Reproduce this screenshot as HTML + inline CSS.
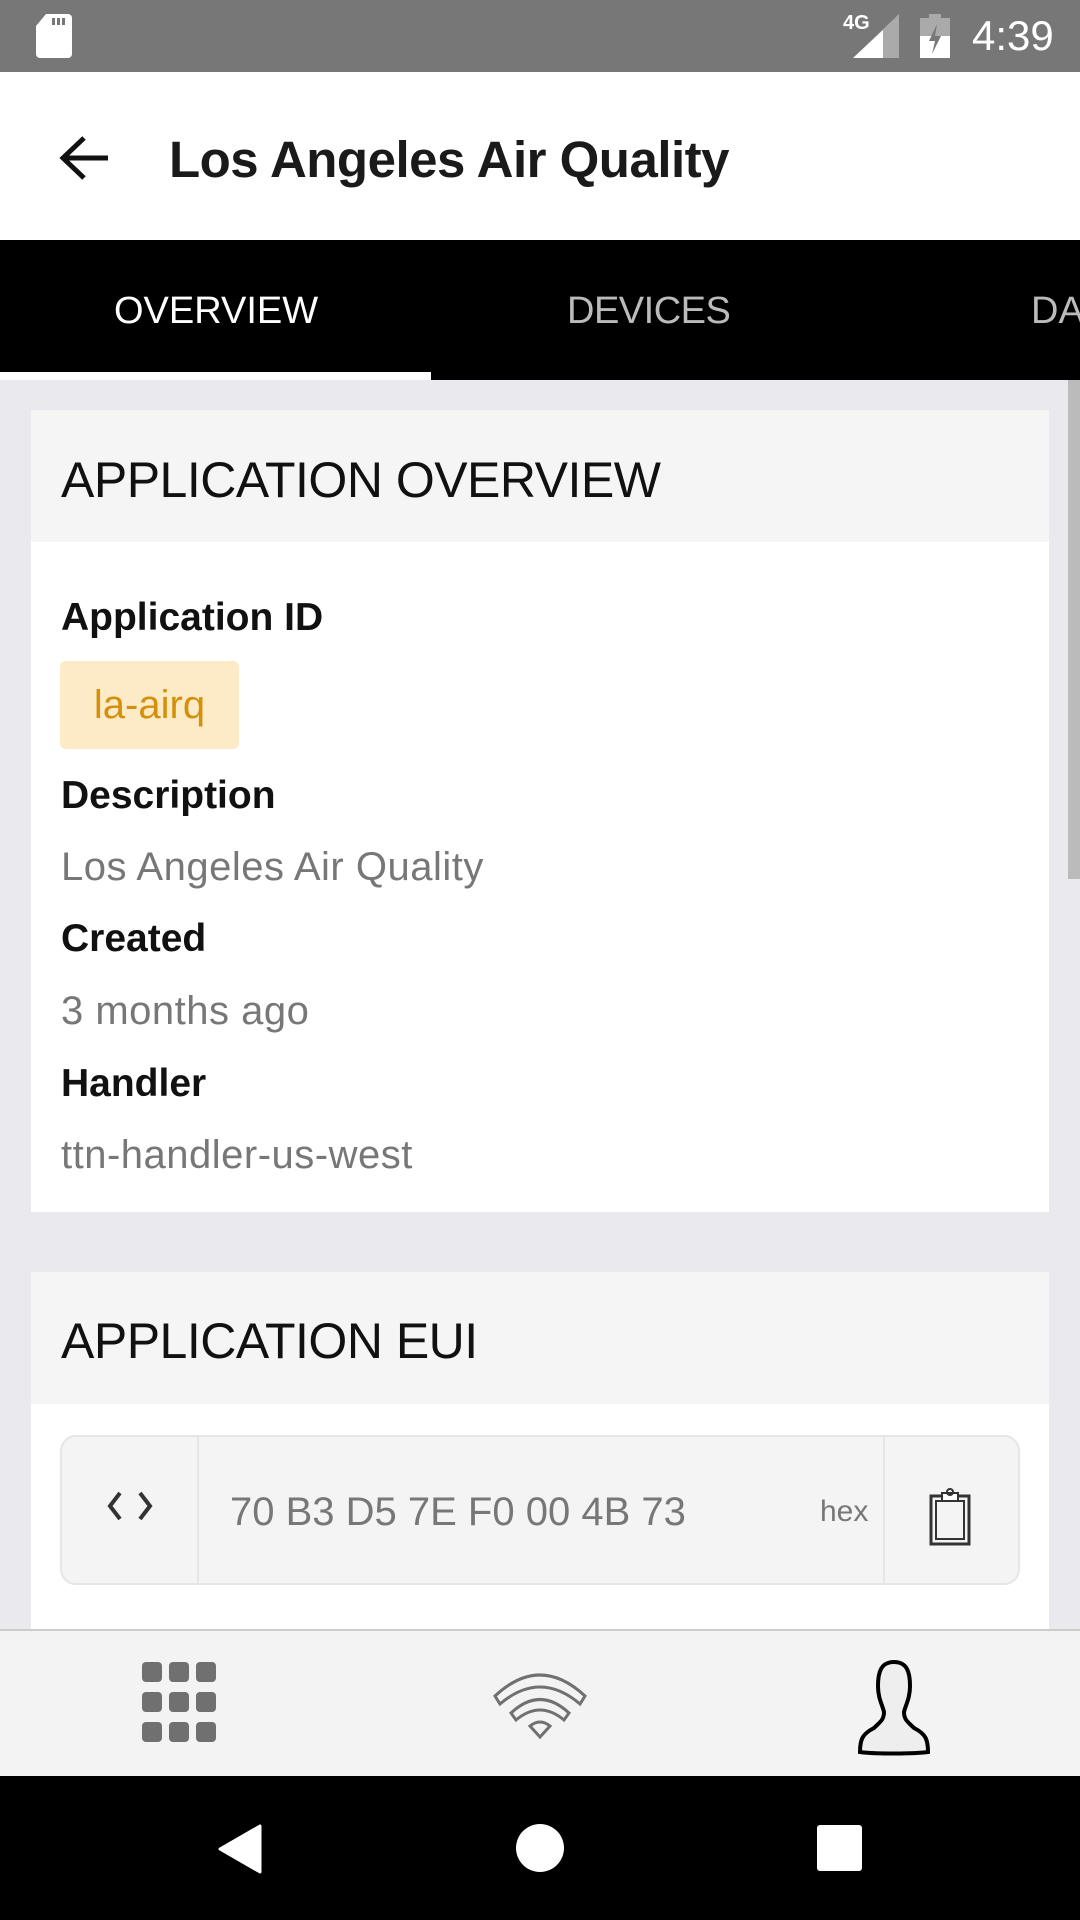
<!DOCTYPE html>
<html><head><meta charset="utf-8"><style>
*{margin:0;padding:0;box-sizing:border-box}
body{width:1080px;height:1920px;position:relative;overflow:hidden;background:#e9e9ee;font-family:"Liberation Sans",sans-serif}
.abs{position:absolute}
.lbl{position:absolute;left:61px;font-weight:bold;font-size:39px;color:#111;line-height:48px}
.val{position:absolute;left:61px;font-size:40px;color:#777;line-height:48px;letter-spacing:0.5px}
</style></head><body>
<div class="abs" style="left:0;top:0;width:1080px;height:72px;background:#777"></div>
<svg class="abs" style="left:36px;top:14px" width="36" height="44"><path d="M10 0H32a4 4 0 0 1 4 4V40a4 4 0 0 1-4 4H4a4 4 0 0 1-4-4V12Z" fill="#fff"/><rect x="16" y="4" width="3" height="7" fill="#777"/><rect x="21" y="4" width="3" height="7" fill="#777"/><rect x="26" y="4" width="3" height="7" fill="#777"/></svg>
<div class="abs" style="left:843px;top:12px;font-size:20px;font-weight:bold;color:#fff">4G</div>
<svg class="abs" style="left:853px;top:14px" width="46" height="44"><path d="M46 0V44H0Z" fill="#aaa"/><path d="M30 16V44H0L30 16Z" fill="#fff"/></svg>
<svg class="abs" style="left:920px;top:14px" width="30" height="44"><rect x="9" y="0" width="12" height="5" fill="#aaa"/><rect x="0" y="4" width="30" height="40" fill="#aaa"/><rect x="0" y="22" width="30" height="22" fill="#fff"/><path d="M17 10L9 27H15L12 40L21 22H15Z" fill="#777"/></svg>
<div class="abs" style="left:972px;top:12px;font-size:42px;color:#fff">4:39</div>

<div class="abs" style="left:0;top:72px;width:1080px;height:168px;background:#fff"></div>
<svg class="abs" style="left:58px;top:134px" width="52" height="48"><path d="M50 24H6M26 4L5 24L26 44" stroke="#111" stroke-width="5" fill="none"/></svg>
<div class="abs" style="left:169px;top:130px;font-size:51px;font-weight:bold;color:#1a1a1a;letter-spacing:-0.5px">Los Angeles Air Quality</div>

<div class="abs" style="left:0;top:240px;width:1080px;height:140px;background:#000"></div>
<div class="abs" style="left:114px;top:290px;font-size:38px;color:#fff">OVERVIEW</div>
<div class="abs" style="left:567px;top:290px;font-size:38px;color:#bbb;letter-spacing:-0.5px">DEVICES</div>
<div class="abs" style="left:1031px;top:290px;font-size:38px;color:#bbb">DA</div>
<div class="abs" style="left:0;top:372px;width:431px;height:8px;background:#fff"></div>
<div class="abs" style="left:1068px;top:380px;width:12px;height:499px;background:#bbb"></div>

<div class="abs" style="left:31px;top:410px;width:1018px;height:802px;background:#fff"></div>
<div class="abs" style="left:31px;top:410px;width:1018px;height:132px;background:#f5f5f5"></div>
<div class="abs" style="left:61px;top:451px;font-size:50px;color:#111;letter-spacing:-0.5px">APPLICATION OVERVIEW</div>
<div class="lbl" style="top:594px">Application ID</div>
<div class="abs" style="left:60px;top:661px;width:179px;height:88px;background:#fdebc8;border-radius:6px;color:#d4900a;font-size:40px;line-height:88px;text-align:center">la-airq</div>
<div class="lbl" style="top:772px">Description</div>
<div class="val" style="top:843px">Los Angeles Air Quality</div>
<div class="lbl" style="top:915px">Created</div>
<div class="val" style="top:987px">3 months ago</div>
<div class="lbl" style="top:1060px">Handler</div>
<div class="val" style="top:1131px">ttn-handler-us-west</div>

<div class="abs" style="left:31px;top:1272px;width:1018px;height:400px;background:#fff"></div>
<div class="abs" style="left:31px;top:1272px;width:1018px;height:132px;background:#f5f5f5"></div>
<div class="abs" style="left:61px;top:1312px;font-size:50px;color:#111;letter-spacing:-0.5px">APPLICATION EUI</div>
<div class="abs" style="left:60px;top:1435px;width:960px;height:150px;background:#f4f4f4;border:2px solid #e6e6e6;border-radius:16px"></div>
<div class="abs" style="left:197px;top:1437px;width:2px;height:146px;background:#e6e6e6"></div>
<div class="abs" style="left:883px;top:1437px;width:2px;height:146px;background:#e6e6e6"></div>
<svg class="abs" style="left:106px;top:1490px" width="48" height="32"><path d="M14 3L4 16L14 29M34 3L44 16L34 29" stroke="#333" stroke-width="4" fill="none"/></svg>
<div class="abs" style="left:230px;top:1490px;font-size:40px;color:#777">70 B3 D5 7E F0 00 4B 73</div>
<div class="abs" style="left:820px;top:1495px;font-size:30px;color:#777">hex</div>
<svg class="abs" style="left:928px;top:1488px" width="46" height="58"><rect x="3" y="8" width="38" height="48" fill="none" stroke="#333" stroke-width="3"/><rect x="8" y="13" width="28" height="38" fill="none" stroke="#333" stroke-width="2"/><rect x="14" y="5" width="16" height="8" fill="#fff" stroke="#333" stroke-width="2"/><circle cx="22" cy="4" r="3" fill="none" stroke="#333" stroke-width="2"/></svg>

<div class="abs" style="left:0;top:1629px;width:1080px;height:147px;background:#f3f3f3;border-top:2px solid #ccc"></div>
<svg class="abs" style="left:142px;top:1662px" width="76" height="82"><g fill="#707070"><rect x="0" y="0" width="20" height="20" rx="4"/><rect x="27" y="0" width="20" height="20" rx="4"/><rect x="54" y="0" width="20" height="20" rx="4"/><rect x="0" y="30" width="20" height="20" rx="4"/><rect x="27" y="30" width="20" height="20" rx="4"/><rect x="54" y="30" width="20" height="20" rx="4"/><rect x="0" y="60" width="20" height="20" rx="4"/><rect x="27" y="60" width="20" height="20" rx="4"/><rect x="54" y="60" width="20" height="20" rx="4"/></g></svg>
<svg class="abs" style="left:492px;top:1668px" width="96" height="72"><g fill="none" stroke="#707070" stroke-width="3"><path d="M3 28Q48 -14 93 28L88 36Q48 2 8 36Z"/><path d="M19 45Q48 18 77 45L72 52Q48 32 24 52Z"/><path d="M48 69L38 58Q48 50 58 58Z"/></g></svg>
<svg class="abs" style="left:854px;top:1658px" width="80" height="98"><path d="M40 4C27 4 24 14 24 28C24 40 28 46 30 54C30 62 26 64 20 70C8 76 6 82 6 94C20 96 60 96 74 94C74 82 72 76 60 70C54 64 50 62 50 54C52 46 56 40 56 28C56 14 53 4 40 4Z" fill="#eee" stroke="#000" stroke-width="4"/></svg>

<div class="abs" style="left:0;top:1776px;width:1080px;height:144px;background:#000"></div>
<svg class="abs" style="left:216px;top:1824px" width="46" height="50"><path d="M44 2V48L4 25Z" fill="#fff" stroke="#fff" stroke-width="3" stroke-linejoin="round"/></svg>
<div class="abs" style="left:516px;top:1824px;width:48px;height:48px;border-radius:50%;background:#fff"></div>
<div class="abs" style="left:817px;top:1825px;width:45px;height:46px;border-radius:3px;background:#fff"></div>
</body></html>
